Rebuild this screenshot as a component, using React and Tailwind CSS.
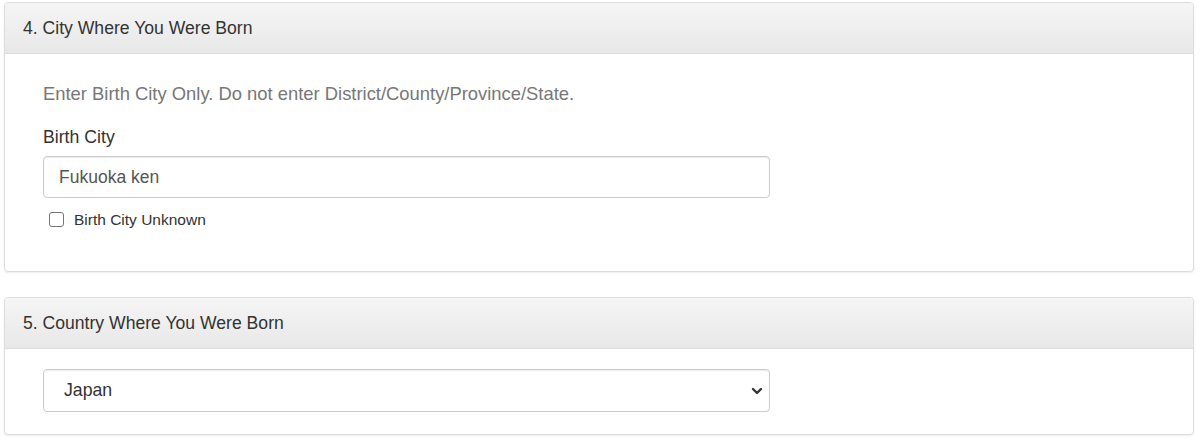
import React from "react";

function Panel({ title, children, className = "" }) {
  return (
    <div className={"ml-[4px] mr-[6px] rounded-[4px] border border-[#dddddd] bg-white shadow-[0_1px_2px_rgba(0,0,0,0.08)] " + className}>
      <div className="h-[51px] flex items-center rounded-t-[3px] border-b border-[#dddddd] bg-[linear-gradient(#f5f5f5,#e8e8e8)] pl-[18px] text-[17.6px] text-[#333333]">
        {title}
      </div>
      {children}
    </div>
  );
}

export default function App() {
  return (
    <div className="min-h-[444px] w-[1200px] bg-white pt-[2px] font-['Liberation_Sans',Arial,sans-serif]">
      <Panel title="4. City Where You Were Born">
        <div className="pl-[38px] pt-[29px] pb-[40px]">
          <p className="text-[18.4px] leading-[22px] text-[#777777]">
            Enter Birth City Only. Do not enter District/County/Province/State.
          </p>
          <div className="mt-[21px] text-[17.7px] leading-[22px] text-[#333333]">Birth City</div>
          <div className="mt-[8px] flex h-[42px] w-[727px] items-center rounded-[4px] border border-[#cccccc] bg-white pl-[15px] text-[17.5px] text-[#555555] shadow-[inset_0_1px_1px_rgba(0,0,0,0.075)]">
            Fukuoka ken
          </div>
          <label className="mt-[10px] flex items-center pl-[6px] text-[15.5px] text-[#333333]">
            <span className="inline-block h-[15px] w-[15px] rounded-[3px] border border-[#767676] bg-white"></span>
            <span className="ml-[10px]">Birth City Unknown</span>
          </label>
        </div>
      </Panel>
      <Panel title="5. Country Where You Were Born" className="mt-[25px]">
        <div className="pl-[38px] pt-[20px] pb-[22px]">
          <div className="flex h-[43px] w-[727px] items-center justify-between rounded-[4px] border border-[#cccccc] bg-white pl-[20px] pr-[4px] text-[17.7px] text-[#333333] shadow-[inset_0_1px_1px_rgba(0,0,0,0.075)]">
            <span>Japan</span>
            <svg width="14" height="14" viewBox="0 0 14 14" className="mr-[1px]">
              <path d="M3 5 L7 9 L11 5" fill="none" stroke="#333" strokeWidth="2.4" strokeLinecap="round" strokeLinejoin="round" />
            </svg>
          </div>
        </div>
      </Panel>
    </div>
  );
}
